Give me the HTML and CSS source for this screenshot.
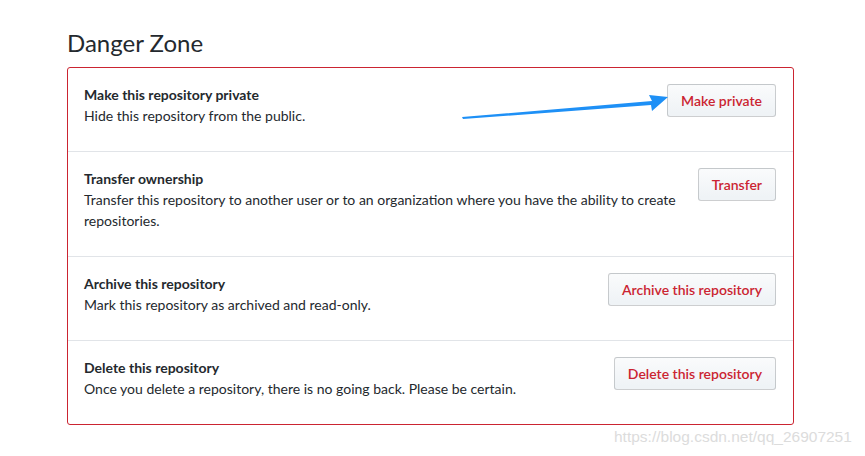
FILE: index.html
```
<!DOCTYPE html>
<html>
<head>
<meta charset="utf-8">
<link rel="stylesheet" href="styles.css">
</head>
<body>
<div class="page">
  <h2 class="heading">Danger Zone</h2>
  <div class="box">
    <div class="row">
      <div class="info">
        <div class="title">Make this repository private</div>
        <p class="desc">Hide this repository from the public.</p>
      </div>
      <button class="btn">Make private</button>
    </div>
    <div class="row">
      <div class="info">
        <div class="title">Transfer ownership</div>
        <p class="desc">Transfer this repository to another user or to an organization where you have the ability to create repositories.</p>
      </div>
      <button class="btn">Transfer</button>
    </div>
    <div class="row">
      <div class="info">
        <div class="title">Archive this repository</div>
        <p class="desc">Mark this repository as archived and read-only.</p>
      </div>
      <button class="btn">Archive this repository</button>
    </div>
    <div class="row">
      <div class="info">
        <div class="title">Delete this repository</div>
        <p class="desc">Once you delete a repository, there is no going back. Please be certain.</p>
      </div>
      <button class="btn">Delete this repository</button>
    </div>
  </div>
</div>
<svg class="arrow" width="220" height="40" viewBox="0 0 220 40">
  <polygon points="0,30 190,14 187,8 206,10 190,24 189,18 1,32" fill="#1e90f6"/>
</svg>
<div class="watermark">https://blog.csdn.net/qq_26907251</div>
</body>
</html>
```
FILE: styles.css
```
html, body {
  margin: 0;
  padding: 0;
  background: #fff;
}
body {
  font-family: Lato, "Liberation Sans", sans-serif;
  color: #24292e;
  font-size: 14px;
  width: 865px;
  height: 456px;
  overflow: hidden;
  position: relative;
}
.page {
  padding: 27px 0 0 67px;
  width: 727px;
}
.heading {
  font-size: 24px;
  font-weight: 400;
  line-height: 32px;
  margin: 0 0 8px 0;
}
.box {
  border: 1px solid #cb2431;
  border-radius: 3px;
}
.row {
  display: flex;
  align-items: flex-start;
  justify-content: space-between;
  padding: 16px 17px 16px 16px;
  border-top: 1px solid #e1e4e8;
  gap: 16px;
}
.row:first-child {
  border-top: none;
}
.info {
  flex: 1;
}
.title {
  font-weight: 700;
  line-height: 21px;
}
.desc {
  margin: 0 0 9px 0;
  line-height: 21px;
}
.btn {
  flex: none;
  font-family: inherit;
  font-size: 14px;
  font-weight: 600;
  line-height: 19px;
  color: #cb2431;
  padding: 6px 13px;
  border: 1px solid rgba(27,31,35,0.2);
  border-radius: 3px;
  background: linear-gradient(#fafbfc, #eff3f6 90%);
}
.arrow {
  position: absolute;
  left: 462px;
  top: 87px;
}
.watermark {
  position: absolute;
  left: 614px;
  top: 428px;
  font-family: "Liberation Sans", Arial, sans-serif;
  font-size: 15.5px;
  color: #dcdcdc;
}
```
